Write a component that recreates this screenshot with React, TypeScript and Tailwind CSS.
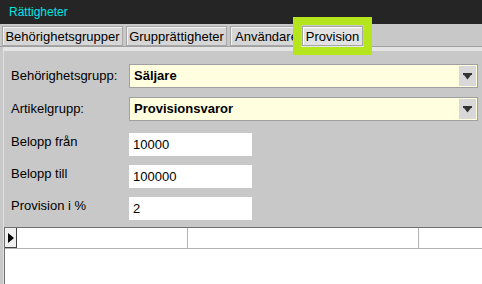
import React from "react";

const Tab = ({ label, w }: { label: string; w: string }) => (
  <div
    className={`${w} h-[20px] border border-[#a6a6a6] bg-[#d6d6d6] shadow-[inset_1px_1px_0_#f2f2f2] flex items-center justify-center text-[13px] text-black leading-none overflow-hidden whitespace-nowrap`}
  >
    {label}
  </div>
);

const Combo = ({ value }: { value: string }) => (
  <div className="w-[349px] h-[24px] border border-[#a0a0a0] bg-[#ffffe0] flex items-stretch">
    <div className="flex-1 flex items-center pl-[4px] text-[13px] font-bold text-black">{value}</div>
    <div className="w-[17px] m-[1px] bg-[#d8d8d8] flex items-center justify-center">
      <svg width="9" height="7" viewBox="0 0 9 7">
        <rect x="0" y="0" width="9" height="2" fill="#333" />
        <polygon points="1,2 8,2 4.5,6.5" fill="#333" />
      </svg>
    </div>
  </div>
);

const Field = ({ value }: { value: string }) => (
  <div className="w-[123px] h-[23px] bg-white flex items-center pl-[4px] text-[13px] text-black">{value}</div>
);

export default function App() {
  return (
    <div
      className="relative w-[482px] h-[284px] bg-[#c8c8c8] overflow-hidden flex flex-col"
      style={{ fontFamily: '"Liberation Sans", Arial, sans-serif' }}
    >
      <div className="h-[24px] bg-[#252525] text-[#00e5e5] text-[12px] pl-[9px] flex items-center shrink-0">
        Rättigheter
      </div>
      <div className="h-[22px] flex items-end gap-[3px] pl-[2px] shrink-0">
        <Tab label="Behörighetsgrupper" w="w-[121px]" />
        <Tab label="Grupprättigheter" w="w-[101px]" />
        <div className="w-[70px] h-[20px] border border-[#a6a6a6] bg-[#d6d6d6] shadow-[inset_1px_1px_0_#f2f2f2] flex items-center pl-[4px] text-[13px] text-black leading-none overflow-hidden whitespace-nowrap">
          Användare
        </div>
      </div>
      <div className="h-[1px] bg-[#a0a0a0] shrink-0" />
      <div className="h-[4px] bg-[#e4e4e4] ml-[3px] shrink-0" />
      <div className="flex-1 flex flex-col ml-[3px] border-l border-[#e0e0e0]">
        <div className="flex flex-col pl-[7px] pt-[13px] gap-[9px]">
          <div className="flex items-center">
            <div className="w-[118px] text-[13px] text-black">Behörighetsgrupp:</div>
            <Combo value="Säljare" />
          </div>
          <div className="flex items-center">
            <div className="w-[118px] text-[13px] text-black">Artikelgrupp:</div>
            <Combo value="Provisionsvaror" />
          </div>
        </div>
        <div className="flex flex-col pl-[7px] pt-[12px] gap-[9px]">
          <div className="flex items-start">
            <div className="w-[118px] text-[13px] text-black leading-[15px] pt-[1px]">Belopp från</div>
            <Field value="10000" />
          </div>
          <div className="flex items-start">
            <div className="w-[118px] text-[13px] text-black leading-[15px] pt-[1px]">Belopp till</div>
            <Field value="100000" />
          </div>
          <div className="flex items-start">
            <div className="w-[118px] text-[13px] text-black leading-[15px] pt-[1px]">Provision i %</div>
            <Field value="2" />
          </div>
        </div>
        <div className="mt-[7px] flex-1 bg-white border-l border-t border-[#707070] flex flex-col">
          <div className="h-[21px] flex border-b border-[#b4b4b4]">
            <div className="w-[12px] bg-[#f0f0f0] border-r border-b border-[#404040] flex items-center justify-center">
              <svg width="6" height="10" viewBox="0 0 6 10">
                <polygon points="0,0 6,5 0,10" fill="#000" />
              </svg>
            </div>
            <div className="w-[171px] border-r border-[#b4b4b4]" />
            <div className="w-[231px] border-r border-[#b4b4b4]" />
            <div className="flex-1" />
          </div>
        </div>
      </div>
      <div className="absolute left-[293px] top-[17px] w-[79px] h-[38px] border-[8px] border-[#b5e61d] bg-[#c8c8c8] flex flex-col">
        <div className="flex-1 flex items-end pl-[1px] pr-[1px]">
          <div className="w-[61px] h-[20px] border border-[#a6a6a6] bg-[#e2e2e2] shadow-[inset_1px_1px_0_#ffffff] flex items-center justify-center text-[13px] text-black leading-none">
            Provision
          </div>
        </div>
        <div className="h-[1px] bg-[#e8e8e8]" />
      </div>
    </div>
  );
}
